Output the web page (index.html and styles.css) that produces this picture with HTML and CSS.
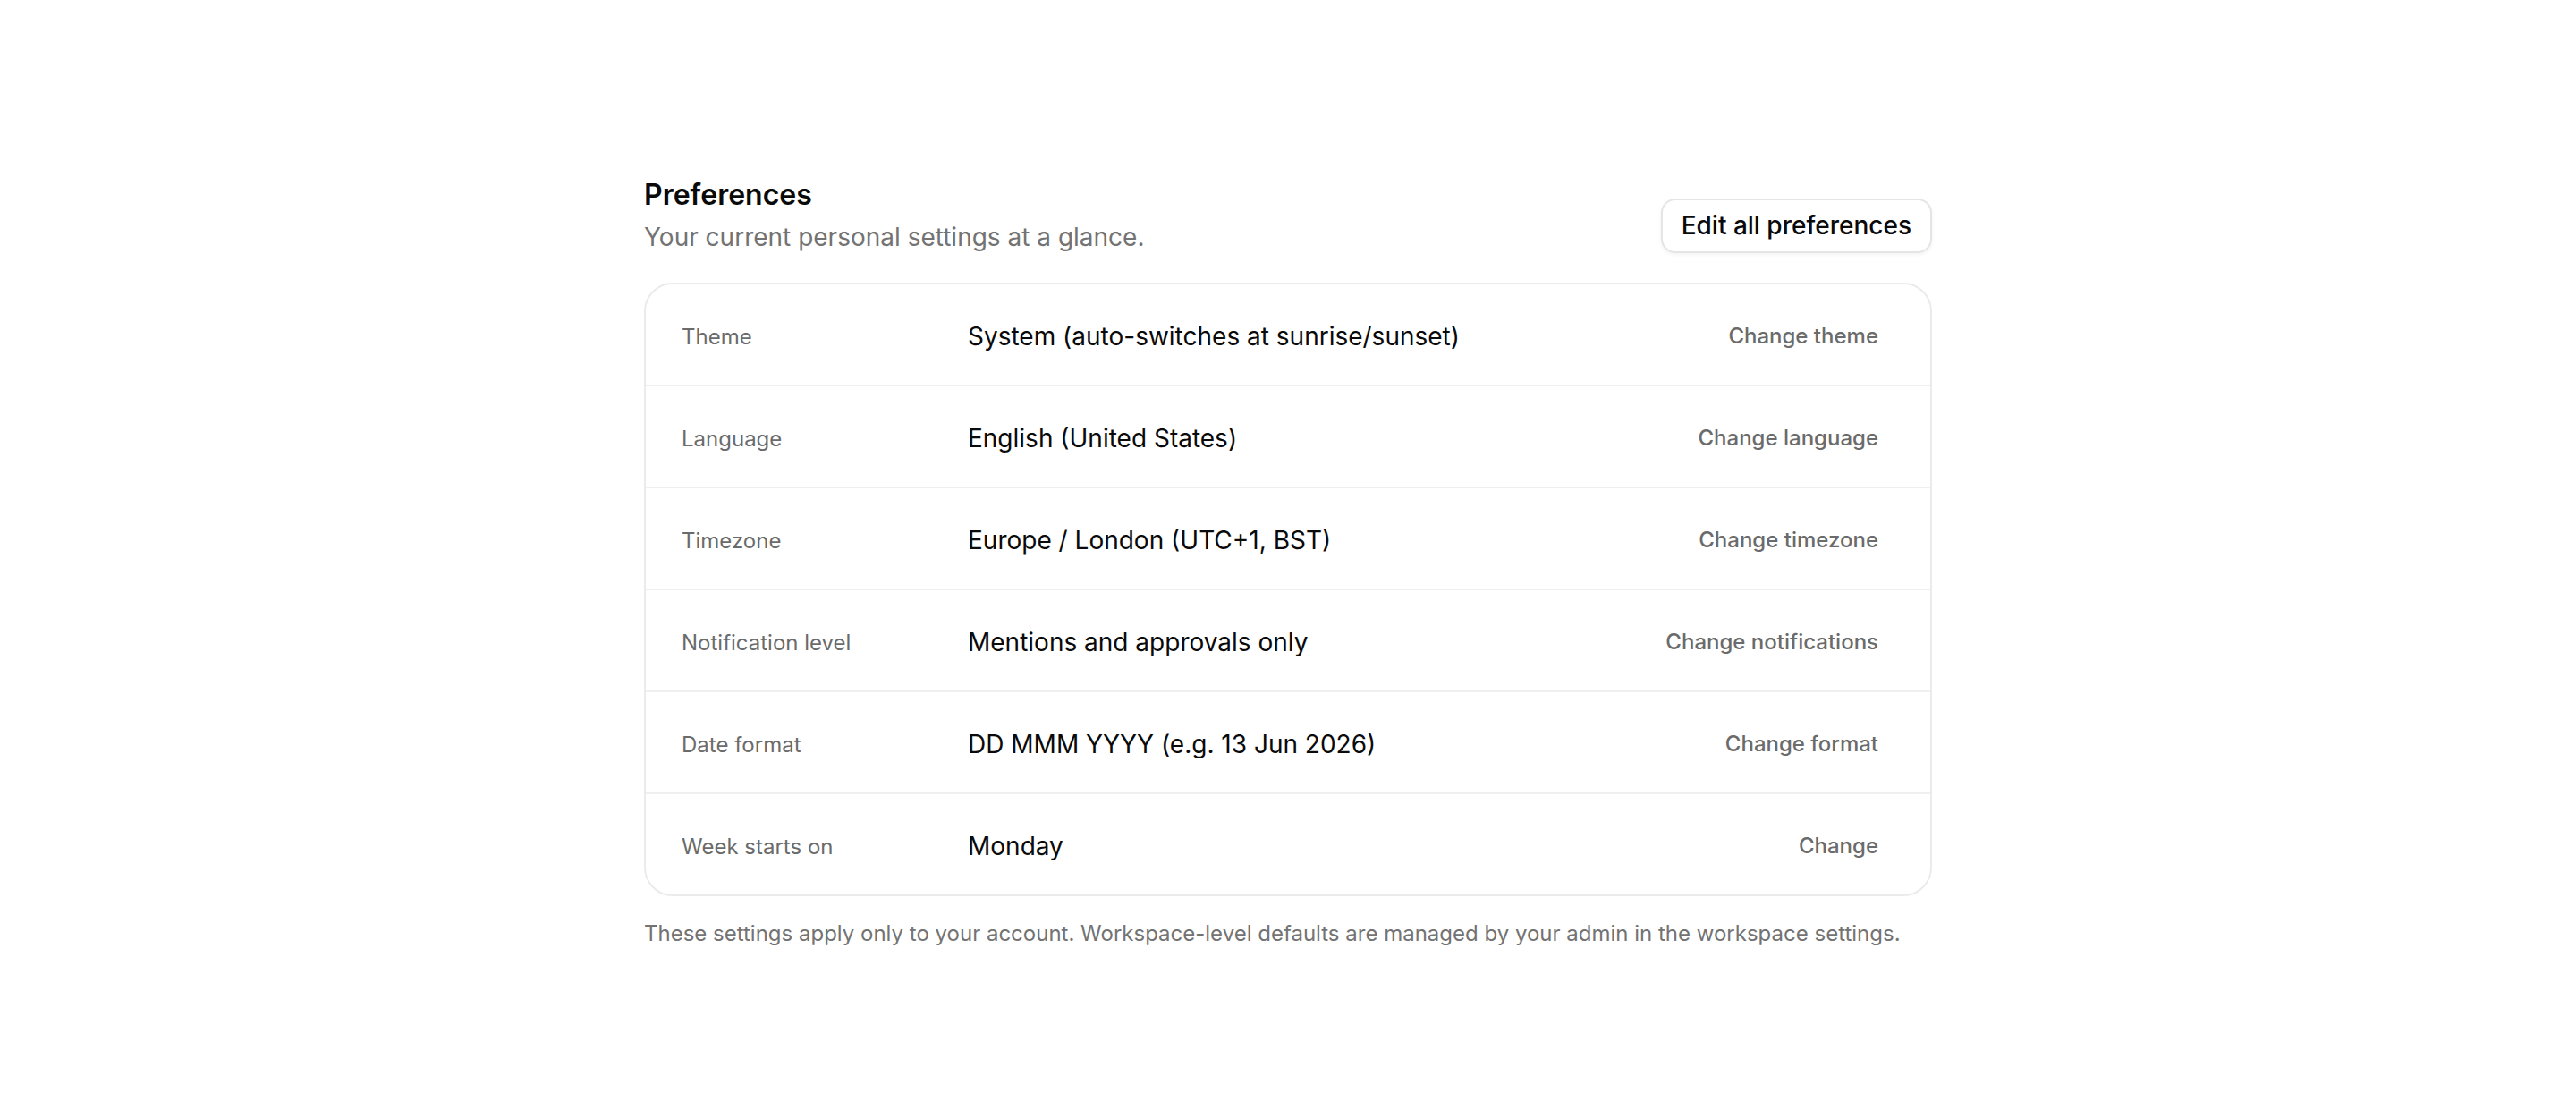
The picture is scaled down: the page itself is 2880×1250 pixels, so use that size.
FILE: index.html
```html
<!DOCTYPE html>
<html lang="en">
<head>
<meta charset="utf-8">
<title>Preferences</title>
<link rel="stylesheet" href="styles.css">
</head>
<body>
<main class="page">
  <section class="prefs">
    <header class="prefs-header">
      <div class="prefs-titles">
        <h1 class="prefs-title">Preferences</h1>
        <p class="prefs-subtitle">Your current personal settings at a glance.</p>
      </div>
      <button class="btn-edit" type="button">Edit all preferences</button>
    </header>
    <div class="card">
      <div class="row">
        <span class="label">Theme</span>
        <span class="value">System (auto-switches at sunrise/sunset)</span>
        <button class="action" type="button">Change theme</button>
      </div>
      <div class="row">
        <span class="label">Language</span>
        <span class="value">English (United States)</span>
        <button class="action" type="button">Change language</button>
      </div>
      <div class="row">
        <span class="label">Timezone</span>
        <span class="value">Europe / London (UTC+1, BST)</span>
        <button class="action" type="button">Change timezone</button>
      </div>
      <div class="row">
        <span class="label">Notification level</span>
        <span class="value">Mentions and approvals only</span>
        <button class="action" type="button">Change notifications</button>
      </div>
      <div class="row">
        <span class="label">Date format</span>
        <span class="value">DD MMM YYYY (e.g. 13 Jun 2026)</span>
        <button class="action" type="button">Change format</button>
      </div>
      <div class="row">
        <span class="label">Week starts on</span>
        <span class="value">Monday</span>
        <button class="action" type="button">Change</button>
      </div>
    </div>
    <p class="footnote">These settings apply only to your account. Workspace-level defaults are managed by your admin in the workspace settings.</p>
  </section>
</main>
</body>
</html>
```

FILE: styles.css
```css
* {
  box-sizing: border-box;
}

html, body {
  margin: 0;
  padding: 0;
  background: #ffffff;
}

body {
  font-family: Inter, "Noto Sans", "Liberation Sans", sans-serif;
  color: #0a0a0a;
}

.page {
  min-height: 100vh;
  display: flex;
  align-items: center;
  justify-content: center;
  padding-top: 10px;
}

.prefs {
  width: 1440px;
}

.prefs-header {
  display: flex;
  justify-content: space-between;
  align-items: flex-end;
  margin-bottom: 32px;
}

.prefs-title {
  margin: 0;
  font-size: 32px;
  line-height: 40px;
  font-weight: 600;
  color: #0a0a0a;
}

.prefs-subtitle {
  margin: 8px 0 0;
  font-size: 28px;
  line-height: 38px;
  color: #737373;
}

.btn-edit {
  font-family: inherit;
  font-size: 28px;
  line-height: 37px;
  font-weight: 500;
  color: #0a0a0a;
  background: #ffffff;
  border: 2px solid #e5e5e5;
  border-radius: 16px;
  padding: 10px 21px;
  margin-bottom: 1px;
  box-shadow: 0 2px 4px rgba(0, 0, 0, 0.05);
}

.card {
  border: 2px solid #ebebeb;
  border-radius: 32px;
  overflow: hidden;
  background: #ffffff;
}

.row {
  display: grid;
  grid-template-columns: 320px 1fr auto;
  align-items: center;
  height: 114px;
  padding: 4px 40px 0;
  border-bottom: 2px solid #efefef;
}

.row:last-child {
  height: 112px;
  border-bottom: none;
}

.label {
  font-size: 24px;
  line-height: 32px;
  font-weight: 400;
  color: #6b6b6b;
  padding-top: 2px;
}

.value {
  font-size: 28px;
  line-height: 40px;
  color: #0a0a0a;
}

.action {
  font-family: inherit;
  font-size: 24px;
  line-height: 32px;
  font-weight: 500;
  color: #6b6b6b;
  background: transparent;
  border: none;
  padding: 8px 18px;
  cursor: pointer;
}

.footnote {
  margin: 24px 0 0;
  font-size: 24px;
  line-height: 36px;
  color: #737373;
}
```
